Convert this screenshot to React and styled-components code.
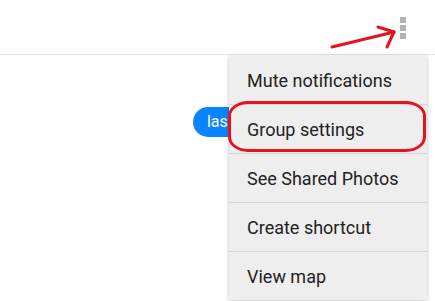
import React from "react";
import styled, { createGlobalStyle } from "styled-components";

const GlobalStyle = createGlobalStyle`
  html, body {
    margin: 0;
    padding: 0;
    background: #ffffff;
    font-family: Roboto, "Liberation Sans", sans-serif;
  }
`;

const Screen = styled.div`
  position: relative;
  width: 435px;
  height: 301px;
  overflow: hidden;
  background: #ffffff;
`;

const Header = styled.div`
  height: 55px;
  border-bottom: 1px solid #e2e2e2;
  display: flex;
  justify-content: flex-end;
  align-items: flex-start;
  padding: 17px 29px 0 0;
  box-sizing: border-box;
`;

const Dots = styled.div`
  display: flex;
  flex-direction: column;
  gap: 2px;
`;

const Dot = styled.span`
  display: block;
  width: 6px;
  height: 6px;
  background: #b3b3b3;
`;

const Thread = styled.div`
  display: flex;
  flex-direction: column;
  padding-top: 52px;
`;

const MessageRow = styled.div`
  display: flex;
  justify-content: flex-end;
  padding-right: 160px;
`;

const Bubble = styled.div`
  background: #0a84ff;
  color: #ffffff;
  font-size: 16px;
  height: 30px;
  line-height: 30px;
  padding: 0 42px 0 14px;
  border-radius: 15px;
`;

const Menu = styled.ul`
  position: absolute;
  top: 56px;
  right: 8px;
  width: 198px;
  margin: 0;
  padding: 0;
  list-style: none;
  background: #eeeeee;
  box-shadow: 0 1px 4px rgba(0, 0, 0, 0.25);
`;

const MenuItem = styled.li`
  height: 48px;
  display: flex;
  align-items: center;
  padding-left: 18px;
  font-size: 18px;
  color: #222222;
  border-bottom: 1px solid #d6d6d6;
  white-space: nowrap;

  &:last-child {
    border-bottom: none;
  }
`;

const Highlight = styled.div`
  position: absolute;
  left: 228px;
  top: 101px;
  width: 198px;
  height: 51px;
  box-sizing: border-box;
  border: 3px solid #e8121e;
  border-radius: 20px / 15px;
  pointer-events: none;
`;

const Annotation = styled.svg`
  position: absolute;
  left: 0;
  top: 0;
  pointer-events: none;
`;

const items = [
  "Mute notifications",
  "Group settings",
  "See Shared Photos",
  "Create shortcut",
  "View map",
];

export default function App() {
  return (
    <Screen>
      <GlobalStyle />
      <Header>
        <Dots>
          <Dot />
          <Dot />
          <Dot />
        </Dots>
      </Header>
      <Thread>
        <MessageRow>
          <Bubble>last</Bubble>
        </MessageRow>
      </Thread>
      <Menu>
        {items.map((label) => (
          <MenuItem key={label}>{label}</MenuItem>
        ))}
      </Menu>
      <Highlight />
      <Annotation width="435" height="301">
        <g stroke="#e8121e" strokeWidth="3" strokeLinecap="round" fill="none">
          <line x1="332" y1="47" x2="394" y2="32" />
          <line x1="378" y1="27" x2="394" y2="32" />
          <line x1="387" y1="47" x2="394" y2="32" />
        </g>
      </Annotation>
    </Screen>
  );
}
